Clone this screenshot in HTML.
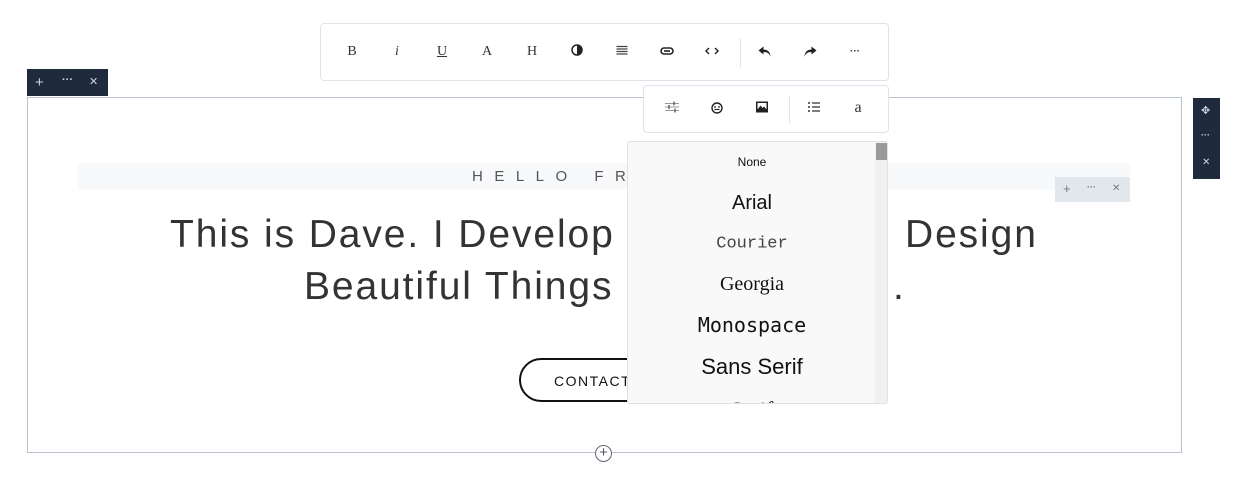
<!DOCTYPE html>
<html><head><meta charset="utf-8"><style>
*{margin:0;padding:0;box-sizing:border-box}
body{width:1240px;height:494px;background:#fff;position:relative;overflow:hidden;font-family:"Liberation Sans",sans-serif}
.abs{position:absolute}
.tb{position:absolute;background:#fff;border:1px solid #dfe3ea;border-radius:4px}
.ic{position:absolute;transform:translate(-50%,-50%);font-family:"Liberation Serif",serif;font-size:14px;color:#333;line-height:1}
.sep{position:absolute;width:1px;background:#e3e6ea}
.dk{position:absolute;background:#1f2a3c;color:#cfd5de;font-size:11px}
.h{position:absolute;font-size:39px;color:#333;letter-spacing:1.9px;line-height:1;white-space:nowrap}
.dd div{position:absolute;left:0;width:248px;text-align:center;transform:translateY(-50%);line-height:1;color:#111}
</style></head><body>
<!-- section -->
<div class="abs" style="left:27px;top:97px;width:1155px;height:356px;border:1px solid #b9c3ce"></div>
<div class="abs" style="left:78px;top:163px;width:1052px;height:27px;background:#f8f9fb"></div>
<div class="abs" style="left:472px;top:168px;font-size:15px;letter-spacing:11.5px;color:#555">HELLO FR</div>
<div class="h" style="left:170px;top:215px">This is Dave. I Develop</div>
<div class="h" style="left:905px;top:215px">Design</div>
<div class="h" style="left:304px;top:267px">Beautiful Things</div>
<div class="h" style="left:893px;top:267px">.</div>
<div class="abs" style="left:519px;top:358px;width:170px;height:44px;border:2px solid #111;border-radius:22px;font-size:14px;letter-spacing:1.5px;padding:13px 0 0 33px;color:#111">CONTACT</div>
<div class="abs" style="left:595px;top:445px;width:17px;height:17px;border:1px solid #667;border-radius:50%;background:#fff;text-align:center;font-size:15px;line-height:14px;color:#556">+</div>
<!-- dark toolbars -->
<div class="dk" style="left:27px;top:69px;width:81px;height:27px">
<span class="abs" style="left:8px;top:5px;font-size:15px">+</span><span class="abs" style="left:35px;top:5px;font-weight:bold">···</span><span class="abs" style="left:62px;top:6px">✕</span></div>
<div class="dk" style="left:1193px;top:98px;width:27px;height:81px">
<span class="abs" style="left:8px;top:6px">✥</span><span class="abs" style="left:8px;top:32px;font-weight:bold;font-size:9px">···</span><span class="abs" style="left:9px;top:59px;font-size:10px">✕</span></div>
<div class="abs" style="left:1055px;top:177px;width:75px;height:25px;background:#e2e7ee;color:#777;font-size:11px">
<span class="abs" style="left:8px;top:4px;font-size:13px">+</span><span class="abs" style="left:32px;top:5px;font-size:9px;font-weight:bold">···</span><span class="abs" style="left:57px;top:6px;font-size:10px">✕</span></div>
<!-- toolbar 1 -->
<div class="tb" style="left:320px;top:23px;width:569px;height:58px"></div>
<div class="ic" style="left:352px;top:52px">B</div>
<div class="ic" style="left:397px;top:52px;font-style:italic">i</div>
<div class="ic" style="left:442px;top:52px;text-decoration:underline">U</div>
<div class="ic" style="left:487px;top:52px">A</div>
<div class="ic" style="left:532px;top:52px">H</div>
<div class="ic" style="left:577px;top:52px"><svg width="12" height="12" viewBox="0 0 12 12"><circle cx="6" cy="6" r="5" fill="none" stroke="#222" stroke-width="1.5"/><path d="M6 1a5 5 0 0 1 0 10z" fill="#222"/></svg></div>
<div class="ic" style="left:622px;top:52px"><svg width="11" height="10"><path d="M0 1.5h11M0 4h11M0 6.5h11M0 9h11" stroke="#444" stroke-width="1.2"/></svg></div>
<div class="ic" style="left:667px;top:52px"><svg width="14" height="8" viewBox="0 0 14 8"><rect x="1" y="1" width="12" height="6" rx="3" fill="none" stroke="#222" stroke-width="1.6"/><path d="M4 4h6" stroke="#222" stroke-width="1.6"/></svg></div>
<div class="ic" style="left:712px;top:52px"><svg width="14" height="8" viewBox="0 0 14 8"><path d="M4 1L1 4l3 3M10 1l3 3-3 3" fill="none" stroke="#222" stroke-width="1.4"/></svg></div>
<div class="sep" style="left:740px;top:38px;height:30px"></div>
<div class="ic" style="left:765px;top:54px"><svg width="13" height="11" viewBox="0 0 13 11"><path d="M5 0L0 4l5 4V5.5c4 0 6 1.5 7 5 0-5-3-7.5-7-7.5z" fill="#222"/></svg></div>
<div class="ic" style="left:810px;top:54px"><svg width="13" height="11" viewBox="0 0 13 11"><path d="M8 0l5 4-5 4V5.5c-4 0-6 1.5-7 5 0-5 3-7.5 7-7.5z" fill="#222"/></svg></div>
<div class="ic" style="left:855px;top:52px;font-size:10px;font-weight:bold;font-family:'Liberation Sans'">···</div>
<!-- toolbar 2 -->
<div class="tb" style="left:643px;top:85px;width:246px;height:48px"></div>
<div class="ic" style="left:672px;top:109px"><svg width="14" height="11"><path d="M0 2h14M0 5.5h14M0 9h14" stroke="#999" stroke-width="1"/><path d="M9 0v4M4 3.5v4M10 7v4" stroke="#555" stroke-width="1.3"/></svg></div>
<div class="ic" style="left:717px;top:110px"><svg width="12" height="12" viewBox="0 0 12 12"><circle cx="6" cy="6" r="5" fill="none" stroke="#222" stroke-width="1.4"/><circle cx="4" cy="5" r=".9" fill="#222"/><circle cx="8" cy="5" r=".9" fill="#222"/><path d="M3.5 7.5h5" stroke="#222" stroke-width="1.2"/></svg></div>
<div class="ic" style="left:762px;top:109px"><svg width="12" height="11" viewBox="0 0 12 11"><rect x="0" y="0" width="12" height="11" fill="#222"/><rect x="1.5" y="1.5" width="9" height="6" fill="#fff"/><path d="M1.5 8l3-4 2 2.5 1.5-1.5 2.5 3z" fill="#222"/></svg></div>
<div class="sep" style="left:789px;top:96px;height:28px"></div>
<div class="ic" style="left:814px;top:109px"><svg width="12" height="10"><path d="M0 1h2M0 5h2M0 9h2" stroke="#333" stroke-width="1.5"/><path d="M4 1h8M4 5h8M4 9h8" stroke="#333" stroke-width="1.2"/></svg></div>
<div class="ic" style="left:858px;top:108px;font-size:16px">a</div>
<!-- dropdown -->
<div class="abs dd" style="left:627px;top:141px;width:261px;height:263px;background:#f9f9fa;border:1px solid #dde2e8;border-radius:3px;overflow:hidden">
<div style="top:20px;font-size:12px">None</div>
<div style="top:61px;font-size:20px">Arial</div>
<div style="top:102px;font-size:17px;font-family:'Liberation Mono',monospace;color:#444">Courier</div>
<div style="top:142px;font-size:20px;font-family:'Liberation Serif',serif">Georgia</div>
<div style="top:183px;font-size:20px;font-family:'DejaVu Sans Mono',monospace">Monospace</div>
<div style="top:225px;font-size:22px">Sans Serif</div>
<div style="top:268px;font-size:22px;font-family:'Liberation Serif',serif">Serif</div>
<span class="abs" style="left:247px;top:0;width:13px;height:263px;background:#f1f1f1"></span>
<span class="abs" style="left:248px;top:1px;width:11px;height:17px;background:#9a9a9a"></span>
</div>
</body></html>
